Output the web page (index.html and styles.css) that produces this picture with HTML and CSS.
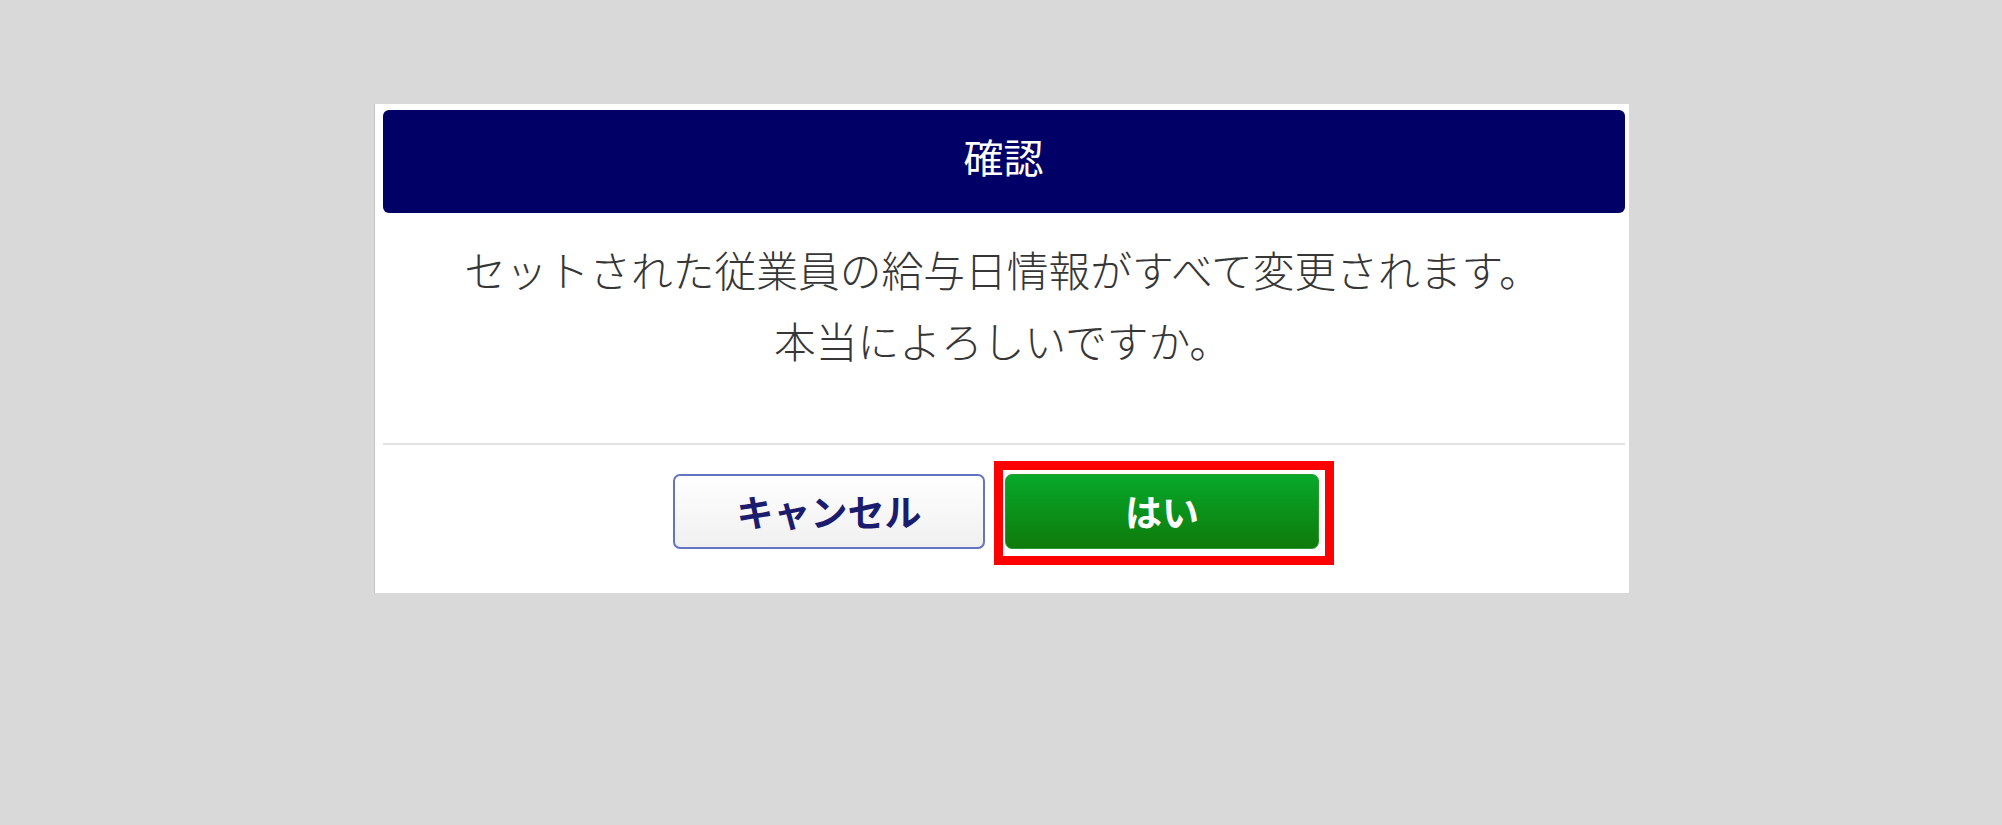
FILE: index.html
```html
<!DOCTYPE html>
<html lang="ja">
<head>
<meta charset="utf-8">
<title>確認</title>
<link rel="stylesheet" href="styles.css">
</head>
<body>
<div class="dialog">
  <div class="dialog-header">確認</div>
  <div class="dialog-body">
    <p class="msg">セットされた従業員の給与日情報がすべて変更されます。</p>
    <p class="msg">本当によろしいですか。</p>
  </div>
  <div class="dialog-footer">
    <button class="btn btn-cancel">キャンセル</button>
    <div class="btn-wrap">
      <button class="btn btn-ok">はい</button>
      <div class="highlight"></div>
    </div>
  </div>
</div>
</body>
</html>
```
FILE: styles.css
```css
html, body {
  margin: 0;
  padding: 0;
}
body {
  background: #d9d9d9;
  font-family: "Noto Sans CJK JP", "Noto Sans", sans-serif;
  padding-top: 104px;
  height: 825px;
  box-sizing: border-box;
}
.dialog {
  width: 1255px;
  margin: 0 auto;
  background: #ffffff;
  border-left: 1px solid #c2c2c2;
  box-sizing: border-box;
  padding: 6px 4px 44px 8px;
}
.dialog-header {
  height: 103px;
  background: #000066;
  border-radius: 6px;
  color: #ffffff;
  font-size: 40px;
  display: flex;
  align-items: center;
  justify-content: center;
  padding-bottom: 12px;
  box-sizing: border-box;
}
.dialog-body {
  padding: 21px 2px 66px 0;
  height: 232px;
  box-sizing: border-box;
  border-bottom: 2px solid #e2e2e2;
}
.msg {
  margin: 0;
  text-align: center;
  font-size: 41.75px;
  font-weight: 300;
  line-height: 71px;
  color: #363636;
  white-space: nowrap;
}
.dialog-footer {
  display: flex;
  justify-content: center;
  gap: 20px;
  padding-top: 29px;
  padding-right: 15px;
}
.btn {
  height: 75px;
  border-radius: 7px;
  font-family: "Noto Sans CJK JP", "Noto Sans", sans-serif;
  font-weight: 700;
  font-size: 37px;
  line-height: 1;
  padding: 0;
  box-sizing: border-box;
  cursor: pointer;
}
.btn-cancel {
  width: 312px;
  background: linear-gradient(#ffffff, #f0f0f0);
  border: 2px solid #6473c2;
  color: #1c1c6e;
}
.btn-wrap {
  position: relative;
}
.btn-ok {
  width: 314px;
  background: linear-gradient(#07a92b, #0f7a0b);
  border: 1px solid #2a9a30;
  color: #ffffff;
  display: block;
}
.highlight {
  position: absolute;
  top: -13px;
  left: -11px;
  right: -15px;
  bottom: -16px;
  border: 9px solid #ff0000;
  pointer-events: none;
}
```
